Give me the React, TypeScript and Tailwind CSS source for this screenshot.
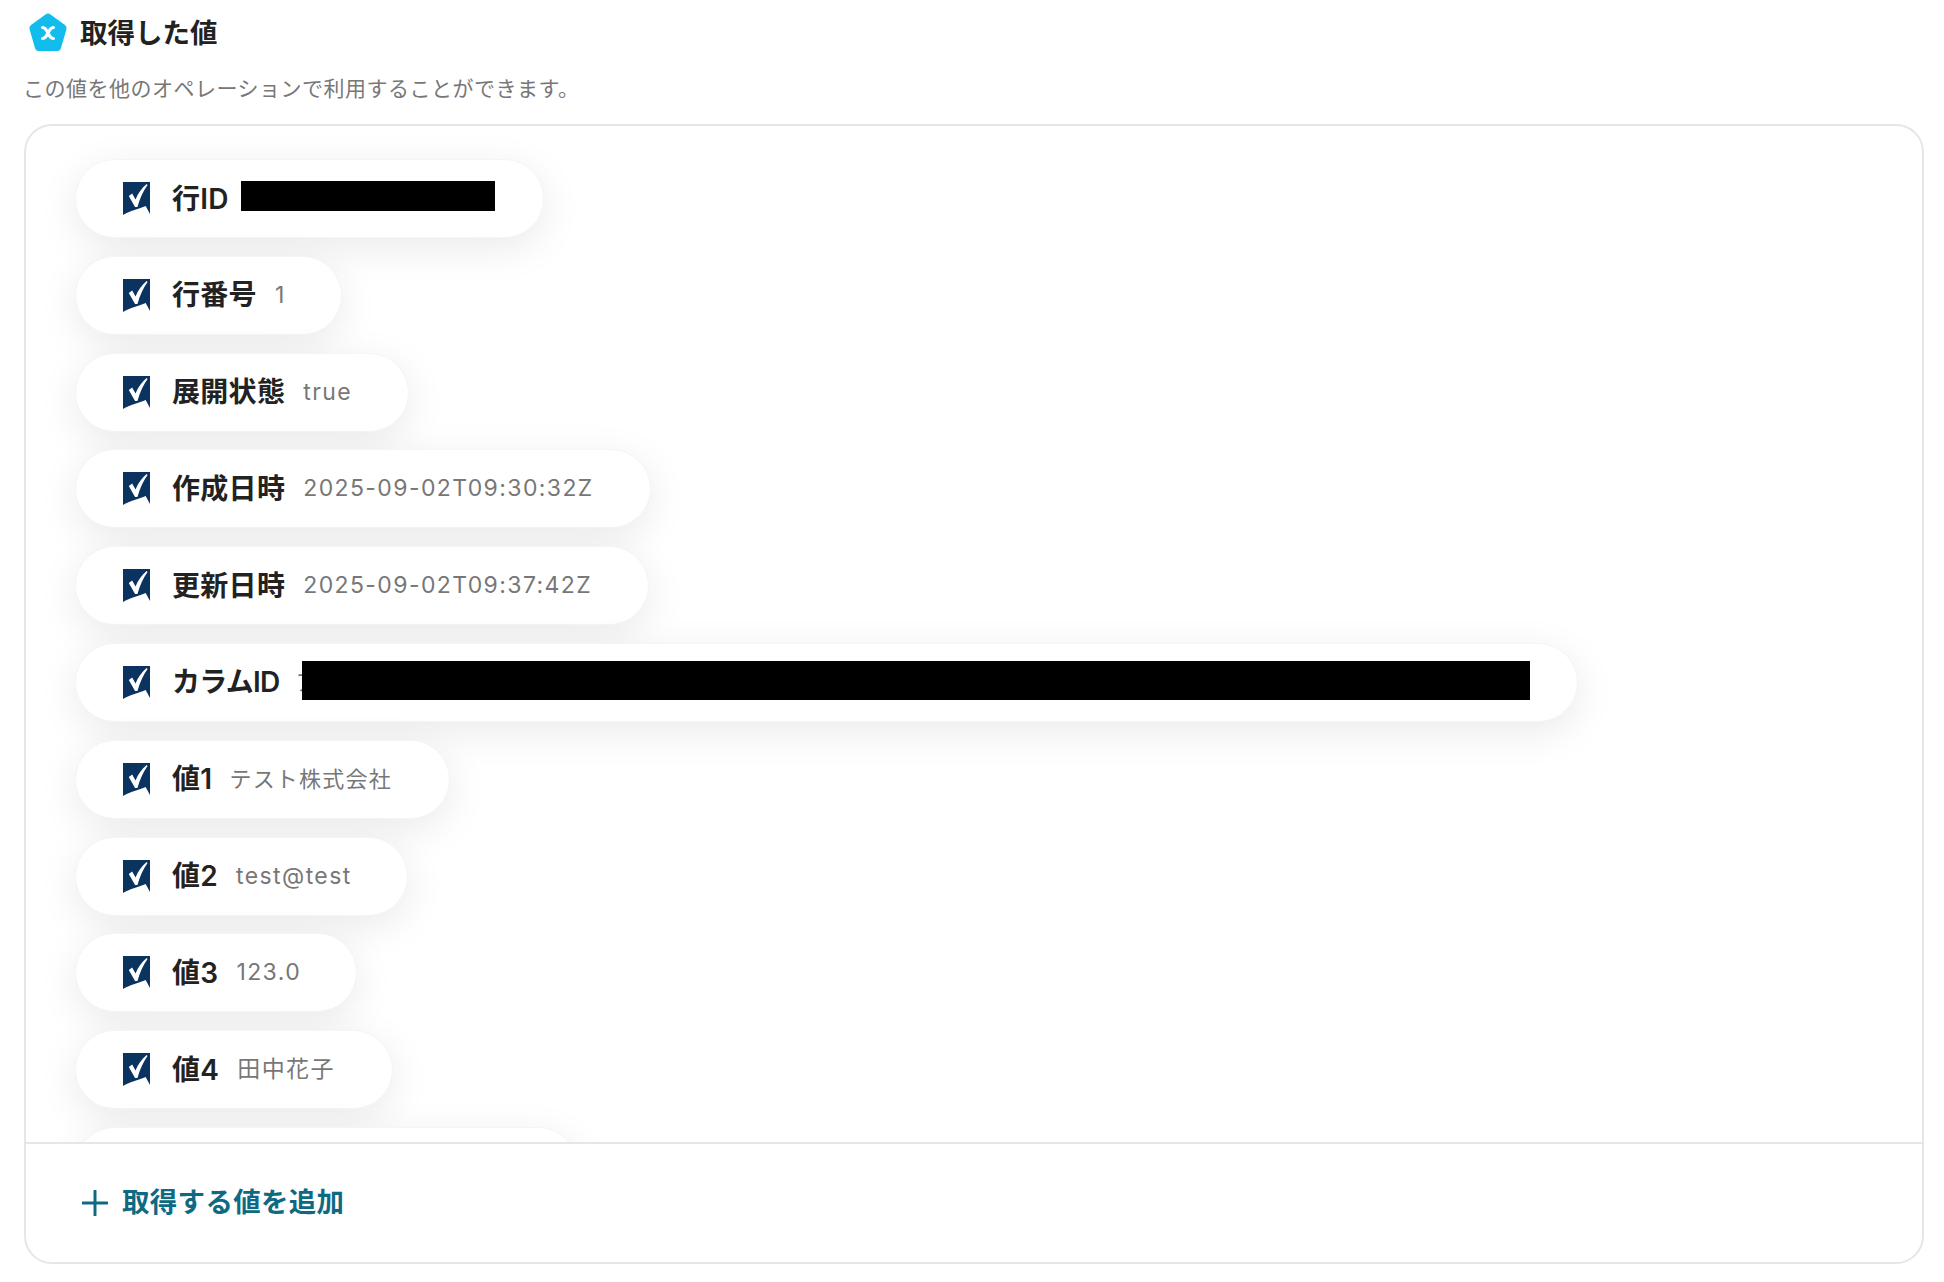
const rows: { label: string; value?: string; w: string; cjk?: boolean; kana?: boolean; redact?: string; sliver?: boolean }[] = [
  { label: "行ID", w: "w-[469px]", redact: "w-[254px] h-[30px] ml-[12px] mb-[5px]" },
  { label: "行番号", value: "1", w: "w-[267px]" },
  { label: "展開状態", value: "true", w: "w-[334px]" },
  { label: "作成日時", value: "2025-09-02T09:30:32Z", w: "w-[576px]" },
  { label: "更新日時", value: "2025-09-02T09:37:42Z", w: "w-[574px]" },
  { label: "カラムID", w: "w-[1503px]", redact: "w-[1228px] h-[39px] mb-[4px]", sliver: true, kana: true },
  { label: "値1", value: "テスト株式会社", w: "w-[375px]", cjk: true },
  { label: "値2", value: "test@test", w: "w-[333px]" },
  { label: "値3", value: "123.0", w: "w-[282px]" },
  { label: "値4", value: "田中花子", w: "w-[318px]" },
  { label: "", w: "w-[503px]" },
];

function Check() {
  return (
    <svg width="27" height="33" viewBox="0 0 28 33" preserveAspectRatio="none" className="shrink-0">
      <path d="M0 0H28V32L23.500 24C17 26.500 7 29 0 33Z" fill="#0a3360" />
      <path d="M6 14L9.500 11.500L13 17.500C15.500 11.500 19.500 6 24.500 2L25.500 3C21 9 17.500 16.500 15 25H12.500Z" fill="#fff" />
    </svg>
  );
}

export default function App() {
  return (
    <div className="w-[1944px] h-[1282px] bg-white overflow-hidden pl-6 pr-5 pt-[10px] font-['Inter','Noto_Sans_CJK_JP',sans-serif]">
      <div className="flex items-center h-[46px]">
        <svg width="42" height="42" viewBox="0 0 42 42" className="shrink-0 ml-[3px]">
          <path d="M18.500 2.500a4 4 0 0 1 5 0L38 13a4 4 0 0 1 1.400 4.400L34 36a4 4 0 0 1-3.800 3H11.800A4 4 0 0 1 8 36L2.600 17.400A4 4 0 0 1 4 13Z" fill="#12bdee" />
          <path d="M15.500 15.500c2.500 0 3.500 1.500 5.500 5.500s3 5.500 5.500 5.500M26.500 15.500c-2.500 0-3.500 1.500-5.500 5.500s-3 5.500-5.500 5.500" stroke="#fff" strokeWidth="3" fill="none" strokeLinecap="round" />
        </svg>
        <h2 className="ml-[11px] mt-[2px] text-[27.500px] leading-none font-bold text-[#222]">取得した値</h2>
      </div>
      <p className="mt-[21px] -ml-px text-[21px] leading-[24px] tracking-[0.5px] text-[#777]">この値を他のオペレーションで利用することができます。</p>
      <div className="mt-[23px] w-[1900px] h-[1140px] border-2 border-[#e6e6e6] rounded-[28px] flex flex-col overflow-hidden">
        <div className="h-[1016px] overflow-hidden pl-[49px] pt-[33px] flex flex-col gap-[17.800px]">
          {rows.map((r, i) => (
            <div
              key={i}
              className={`${r.w} h-[79px] shrink-0 rounded-[40px] bg-white border border-[#f5f5f5] shadow-[0_10px_40px_rgba(0,0,0,0.085)] flex items-center pl-[47px]`}
            >
              <Check />
              {r.label ? (
                <span
                  className={
                    r.kana
                      ? "ml-[22px] text-[28px] leading-none font-semibold text-[#222] whitespace-nowrap tracking-[-0.700px]"
                      : "ml-[22px] text-[28px] leading-none font-semibold text-[#222] whitespace-nowrap tracking-[0.300px]"
                  }
                >
                  {r.label}
                </span>
              ) : null}
              {r.value ? (
                <span
                  className={
                    r.cjk
                      ? "ml-[17px] text-[22px] leading-none text-[#777] tracking-[1.2px] whitespace-nowrap"
                      : "ml-[18px] text-[23px] leading-none text-[#777] tracking-[1.400px] whitespace-nowrap"
                  }
                >
                  {r.value}
                </span>
              ) : null}
              {r.sliver ? (
                <span className="ml-[16px] w-[6px] overflow-hidden text-[22px] leading-none text-[#777]">ア</span>
              ) : null}
              {r.redact ? <span className={`bg-black ${r.redact}`} /> : null}
            </div>
          ))}
        </div>
        <div className="flex-1 border-t-2 border-[#e6e6e6] flex items-center pl-[56px]">
          <svg width="26" height="26" viewBox="0 0 26 26" className="shrink-0">
            <path d="M13 1V25M1 13H25" stroke="#0e6a82" strokeWidth="3" strokeLinecap="round" />
          </svg>
          <span className="ml-[14px] text-[27.500px] leading-none font-bold tracking-[0.300px] text-[#0e6a82]">取得する値を追加</span>
        </div>
      </div>
    </div>
  );
}
